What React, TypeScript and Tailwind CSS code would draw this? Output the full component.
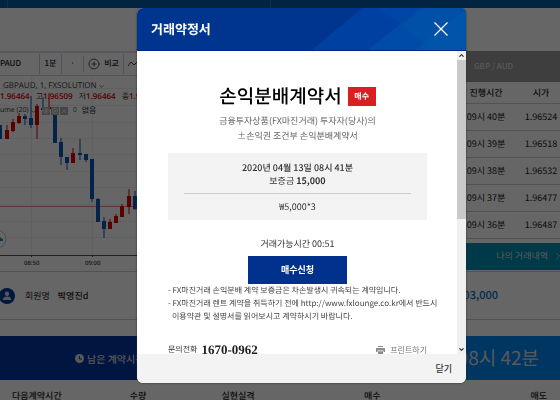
import React from 'react';
import { X, ChevronUp, ChevronDown, ChevronRight, CirclePlus, Eye, Settings } from 'lucide-react';

type Candle = { x: number; top: number; bottom: number; high: number; low: number; up?: boolean };

const candles: Candle[] = [
  { x: -2, top: 125, bottom: 139, high: 125, low: 139 },
  { x: 5, top: 130, bottom: 139, high: 125, low: 139, up: true },
  { x: 11, top: 122, bottom: 131, high: 119, low: 132, up: true },
  { x: 17, top: 116, bottom: 123, high: 113, low: 124, up: true },
  { x: 23, top: 116, bottom: 119, high: 114, low: 125 },
  { x: 29, top: 118, bottom: 125, high: 96, low: 128 },
  { x: 35, top: 106, bottom: 125, high: 104, low: 139, up: true },
  { x: 41, top: 108, bottom: 110, high: 97, low: 112 },
  { x: 47, top: 107, bottom: 109, high: 93, low: 112, up: true },
  { x: 53, top: 113, bottom: 143, high: 112, low: 143 },
  { x: 59, top: 142, bottom: 157, high: 138, low: 165 },
  { x: 65, top: 157, bottom: 163, high: 157, low: 170 },
  { x: 71, top: 153, bottom: 163, high: 148, low: 163, up: true },
  { x: 78, top: 153, bottom: 155, high: 139, low: 160 },
  { x: 84, top: 154, bottom: 160, high: 154, low: 162 },
  { x: 90, top: 159, bottom: 199, high: 159, low: 202 },
  { x: 96, top: 199, bottom: 222, high: 198, low: 222 },
  { x: 102, top: 221, bottom: 229, high: 217, low: 238 },
  { x: 108, top: 222, bottom: 229, high: 219, low: 229, up: true },
  { x: 114, top: 216, bottom: 223, high: 214, low: 223, up: true },
  { x: 120, top: 206, bottom: 217, high: 204, low: 217, up: true },
  { x: 127, top: 196, bottom: 207, high: 189, low: 214, up: true },
  { x: 133, top: 196, bottom: 209, high: 191, low: 210 },
];

const prices = [
  ['09시 40분', '1.96524'],
  ['09시 39분', '1.96518'],
  ['09시 38분', '1.96532'],
  ['09시 37분', '1.96477'],
  ['09시 36분', '1.96487'],
];

function Chart() {
  return (
    <section className="relative h-[195px] overflow-hidden border-r border-[#888] text-[#333]">
      <svg className="absolute left-0 top-0" width="138" height="195" viewBox="0 76 138 195" aria-hidden="true">
        {[88, 105, 122, 138, 154, 171, 187, 204, 221, 237].map((y) => (
          <path key={y} d={`M0 ${y}.5H138`} stroke="#eaf1f5" />
        ))}
        <path d="M31.5 76V255M92.5 76V255" stroke="#eaf1f5" />
        <path d="M0 206.5H138" stroke="#e08080" />
        {candles.map((c) => (
          <g key={c.x} fill={c.up ? '#e00000' : '#0b55b8'}>
            <rect x={c.x + 1.5} y={c.high} width="1" height={c.low - c.high} />
            <rect x={c.x} y={c.top} width="4" height={c.bottom - c.top} />
          </g>
        ))}
        <path d="M0 255.5H138M31.5 255v2M92.5 255v2" stroke="#555" />
        <circle cx="-3" cy="239" r="9" fill="#fff" stroke="#bbb" />
        <path d="M-4 241V238L-1 236L1 238L3 239V241Z" fill="#1689c8" />
        <g fontFamily="Open Sans, Noto Sans, sans-serif" fontSize="6" fontWeight="600" fill="#444">
          <text x="24" y="265">08:50</text>
          <text x="85" y="265">09:00</text>
        </g>
      </svg>
      <div className="relative whitespace-nowrap pt-[5px] font-['Open_Sans','Noto_Sans_CJK_KR',sans-serif]">
        <div className="flex h-[10px] items-center gap-px pl-[3px] text-[8px] leading-[10px]">
          GBPAUD, 1, FXSOLUTION
          <ChevronDown size={7} />
        </div>
        <div className="mt-px flex h-[10px] items-center gap-[6px] text-[8px] font-semibold leading-[10px] text-[#d00000]">
          <span>1.96464</span>
          <span><span className="font-normal text-[#444]">고</span>1.96509</span>
          <span><span className="font-normal text-[#444]">저</span>1.96464</span>
          <span><span className="font-normal text-[#444]">종</span>1.96464</span>
        </div>
        <div className="mt-[3px] flex h-3 items-center gap-px text-[7px] leading-[10px]">
          ume (20)
          <ChevronDown size={7} />
          <span className="ml-1 bg-[#aaa] text-white"><Eye size={8} /></span>
          <span className="bg-[#aaa] text-white"><Settings size={8} /></span>
          <span className="bg-[#aaa] text-white"><X size={8} /></span>
          <span className="ml-1 text-[#169060]">0</span>
          <span className="ml-1 text-[8px]">없음</span>
        </div>
      </div>
    </section>
  );
}

function TradePage() {
  return (
    <main className="min-h-screen bg-white text-[#222]">
      <div className="flex h-2 bg-[#005aa5]">
        <div className="w-2 border-r border-[#207abb]" />
        <div className="w-[263px] border-r border-[#207abb]" />
      </div>
      <div className="mt-[43px] flex h-[220px]">
        <div className="flex-1 border-t-2 border-[#dadae6]">
          <div className="flex h-[23px] items-center border-b border-[#ccd] text-[8px] font-medium">
            <span className="w-10 border-r border-[#ccd] leading-5">PAUD</span>
            <span className="w-[22px] border-r border-[#ccd] text-center leading-5">1분</span>
            <span className="w-[22px] border-r border-[#ccd] text-center leading-4">·</span>
            <span className="flex w-10 items-center justify-center gap-1 border-r border-[#ccd] leading-5">
              <CirclePlus size={12} strokeWidth={1.5} />
              비교
            </span>
            <svg className="ml-1" width="11" height="8" viewBox="0 0 11 8" fill="none" stroke="#444" aria-hidden="true">
              <path d="M0 6 3 2l3 3 3-3 2 2" />
            </svg>
          </div>
          <div className="w-[138px]"><Chart /></div>
        </div>
        <aside className="w-[110px]">
          <h2 className="h-[31px] bg-[#9b9b9b] pl-6 text-[8px] font-medium leading-[32px] text-[#ddd]">GBP / AUD</h2>
          <table className="w-full table-fixed border-collapse text-center text-[9px]">
            <thead>
              <tr className="h-[21px] border-b border-[#ccc]">
                <th className="w-[72px] font-medium">진행시간</th>
                <th className="font-medium">시가</th>
              </tr>
            </thead>
            <tbody>
              {prices.map(([time, price]) => (
                <tr key={time} className="h-[27px] border-b border-[#ccc]">
                  <td>{time}</td>
                  <td>{price}</td>
                </tr>
              ))}
            </tbody>
          </table>
          <a href="#history" className="mt-1 flex h-[27px] items-center justify-end gap-1 bg-[#0091b3] text-[9px] text-[#ddd]">
            나의 거래내역
            <ChevronRight className="-mr-1" size={12} strokeWidth={1.5} />
          </a>
        </aside>
      </div>
      <section className="flex h-[49px] items-center border-b border-t border-[#ccccd4] text-[9px]">
        <svg className="-ml-px" width="16" height="16" viewBox="0 0 16 16" aria-hidden="true">
          <circle cx="8" cy="8" r="8" fill="#003a9c" />
          <circle cx="8" cy="5.8" r="2.2" fill="#ddd" />
          <path d="M3.7 12c0-2.4 1.5-3.6 4.3-3.6s4.3 1.2 4.3 3.6Z" fill="#ddd" />
        </svg>
        <span className="ml-[10px]">회원명</span>
        <span className="ml-2 font-medium">박영진d</span>
        <span className="ml-auto mr-[62px] text-[11px] font-medium text-[#006acb]">103,000</span>
      </section>
      <section className="mt-4 flex h-11 bg-[#0035a0] text-[#ddd]">
        <div className="flex flex-1 items-center pl-[75px] text-[10px] font-medium">
          <svg width="9" height="9" viewBox="0 0 9 9" aria-hidden="true">
            <circle cx="4.5" cy="4.5" r="4.5" fill="#ddd" />
            <path d="M4.5 2v3H7" fill="none" stroke="#0035a0" />
          </svg>
          <span className="ml-[3px]">남은 계약시간</span>
        </div>
        <div className="flex w-[260px] items-center justify-end bg-[#0088f5] pr-[21px] text-[19px]">08시 42분</div>
      </section>
      <div className="flex h-8 items-center whitespace-nowrap text-[9px] font-medium">
        <span className="w-[72px] pl-3">다음계약시간</span>
        <span className="w-[132px] text-center">수량</span>
        <span className="w-[68px] text-center">실현실격</span>
        <span className="flex-1 pl-[92px]">매수</span>
        <span className="pr-[13px]">매도</span>
      </div>
    </main>
  );
}

function Dialog() {
  return (
    <div className="fixed inset-0 flex items-start justify-center bg-black/60 pl-[43px] pt-2">
      <div
        role="dialog"
        aria-labelledby="dialog-title"
        className="flex w-[329px] flex-col overflow-hidden rounded-md bg-white text-[#333] shadow-[0_0_2px_#222]"
      >
        <header className="relative flex h-[43px] items-center justify-between border-b border-[#002a80] bg-[#00358f] pl-[14px] pr-[18px] text-white">
          <svg className="absolute right-0 top-0" width="154" height="42" viewBox="0 0 154 42" aria-hidden="true">
            <path d="M0 42 50 0H154V42Z" fill="#0040a1" />
            <path d="M67 0 90 17 58 42H154V0Z" fill="#0046a6" />
            <path d="M56 42 108 0H154V42Z" fill="#004ba6" />
            <path d="M90 17 122 42H154V0H111Z" fill="#0050a8" />
            <path d="M104 42 154 0V42Z" fill="#0056ab" opacity=".7" />
          </svg>
          <h1 id="dialog-title" className="relative text-[13px] font-bold">거래약정서</h1>
          <button type="button" aria-label="창 닫기" className="relative">
            <svg width="14" height="14" viewBox="0 0 14 14" fill="none" stroke="#fff" strokeWidth="1.2" aria-hidden="true">
              <path d="m.5.5 13 13M13.5.5l-13 13" />
            </svg>
          </button>
        </header>
        <div className="flex h-[303px] overflow-hidden">
          <div className="min-w-0 flex-1 pl-[31px] pr-[30px] pt-[31px]">
            <div className="flex items-center justify-center gap-[6px]">
              <h2 className="text-[19px] font-medium leading-7 text-black">손익분배계약서</h2>
              <span className="w-7 bg-[#d91f22] text-center text-[8px] font-bold leading-[19px] text-white">매수</span>
            </div>
            <p className="mt-[3px] text-center text-[9px] leading-[15px] text-[#666]">
              금융투자상품(FX마진거래) 투자자(당사)의
              <br />
              ±손익권 조건부 손익분배계약서
            </p>
            <div className="mt-[10px] h-[67px] bg-[#f3f3f3] px-4 pt-2 text-center text-[9px] leading-[13px]">
              <p className="font-medium">2020년 04월 13일 08시 41분</p>
              <p>보증금 <b>15,000</b></p>
              <p className="mt-[6px] border-t border-[#ccc] pt-[6px]">₩5,000*3</p>
            </div>
            <p className="mt-4 text-center text-[9px] leading-4">거래가능시간 00:51</p>
            <button type="button" className="mx-auto mt-1 block h-7 w-[99px] bg-[#00328d] text-[9px] font-bold text-white">
              매수신청
            </button>
            <ul className="-mr-3 whitespace-nowrap text-[8px] leading-[13px] text-[#444]">
              <li>- FX마진거래 손익분배 계약 보증금은 차손발생시 귀속되는 계약입니다.</li>
              <li>- FX마진거래 렌트 계약을 취득하기 전에 http://www.fxlounge.co.kr에서 반드시</li>
              <li className="pl-1">이용약관 및 설명서를 읽어보시고 계약하시기 바랍니다.</li>
            </ul>
            <div className="mt-[19px] flex items-center justify-between text-[8px] leading-4">
              <p className="flex items-center gap-1">
                문의전화
                <b className="font-['Liberation_Serif',serif] text-[13px] text-[#222]">1670-0962</b>
              </p>
              <button type="button" className="flex items-center gap-[5px] text-[#777]">
                <svg width="9" height="8" viewBox="0 0 9 8" fill="#8c8c8c" aria-hidden="true">
                  <path d="M2 0h5v1H2ZM0 2h9v4H7.5V4.5h-6V6H0ZM2 5.2h5V8H2Z" />
                </svg>
                프린트하기
              </button>
            </div>
          </div>
          <div className="flex w-[9px] flex-col items-center bg-[#f0f0f0]" aria-hidden="true">
            <ChevronUp className="my-px" size={7} strokeWidth={4} />
            <div className="h-[159px] w-full bg-[#c9c9c9]" />
            <ChevronDown className="mb-px mt-auto" size={7} strokeWidth={4} />
          </div>
        </div>
        <footer className="flex h-[29px] items-center justify-end bg-[#f3f3f3] pr-[14px] text-[9px] font-medium">
          <button type="button">닫기</button>
        </footer>
      </div>
    </div>
  );
}

export default function App() {
  return (
    <div className="h-screen overflow-hidden font-['Noto_Sans_CJK_KR',sans-serif] [text-rendering:geometricPrecision]">
      <TradePage />
      <Dialog />
    </div>
  );
}
